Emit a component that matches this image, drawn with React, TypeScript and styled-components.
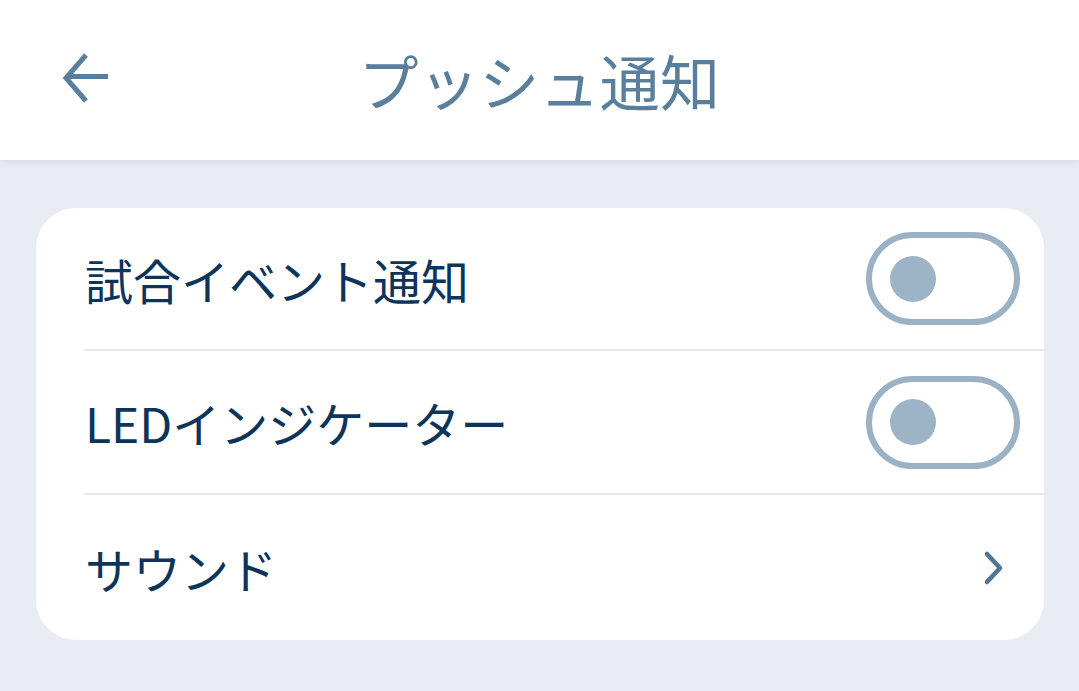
import React from "react";
import styled, { createGlobalStyle } from "styled-components";

const Global = createGlobalStyle`
  html, body { margin: 0; padding: 0; background: #e9ecf2; }
  body { font-family: "Noto Sans CJK JP", "Noto Sans", sans-serif; }
`;

const Page = styled.div`
  width: 1079px;
  height: 691px;
  background: #e9ecf2;
  overflow: hidden;
`;

const Header = styled.header`
  position: relative;
  height: 160px;
  background: #ffffff;
  display: flex;
  align-items: center;
  justify-content: center;
  box-shadow: 0 2px 8px rgba(0, 0, 0, 0.08);
`;

const BackButton = styled.button`
  position: absolute;
  left: 56px;
  top: 50px;
  width: 56px;
  height: 56px;
  border: none;
  background: transparent;
  padding: 0;
  display: flex;
  align-items: center;
  justify-content: center;
`;

const Title = styled.h1`
  margin: 0;
  margin-top: -2px;
  font-size: 60px;
  font-weight: 400;
  color: #5a7f9c;
  letter-spacing: 0.3px;
`;

const Content = styled.main`
  padding: 48px 35px 0 36px;
`;

const Card = styled.section`
  background: #ffffff;
  border-radius: 40px;
  overflow: hidden;
`;

const Row = styled.div<{ $divider?: boolean; $h: number }>`
  height: ${(p) => p.$h}px;
  margin-left: 48px;
  padding-right: 24px;
  display: flex;
  align-items: center;
  justify-content: space-between;
  border-bottom: ${(p) => (p.$divider ? "2px solid #e5e8ec" : "none")};
`;

const Label = styled.span`
  font-size: 48px;
  color: #0d3459;
  line-height: 1;
  margin-left: 1px;
`;

const Toggle = styled.div`
  box-sizing: border-box;
  width: 154px;
  height: 93px;
  border: 6px solid #9bb1c4;
  border-radius: 50px;
  display: flex;
  align-items: center;
  padding-left: 18px;
`;

const Knob = styled.div`
  width: 46px;
  height: 46px;
  border-radius: 50%;
  background: #9db3c6;
`;

const ChevronWrap = styled.div`
  width: 40px;
  display: flex;
  justify-content: center;
  margin-right: 6px;
`;

export default function App() {
  return (
    <Page>
      <Global />
      <Header>
        <BackButton aria-label="back">
          <svg width="52" height="52" viewBox="0 0 52 52" fill="none">
            <path
              d="M50 24.5H10 M28 3 L8 26 L28 49"
              stroke="#5a7f9c"
              strokeWidth="5"
              strokeLinecap="butt"
              strokeLinejoin="miter"
            />
          </svg>
        </BackButton>
        <Title>プッシュ通知</Title>
      </Header>
      <Content>
        <Card>
          <Row $divider $h={141}>
            <Label>試合イベント通知</Label>
            <Toggle>
              <Knob />
            </Toggle>
          </Row>
          <Row $divider $h={142}>
            <Label>LEDインジケーター</Label>
            <Toggle>
              <Knob />
            </Toggle>
          </Row>
          <Row $h={145}>
            <Label>サウンド</Label>
            <ChevronWrap>
              <svg width="22" height="36" viewBox="0 0 22 36" fill="none">
                <path
                  d="M4 4 L17 18 L4 32"
                  stroke="#4f7594"
                  strokeWidth="4.5"
                  strokeLinecap="round"
                  strokeLinejoin="round"
                />
              </svg>
            </ChevronWrap>
          </Row>
        </Card>
      </Content>
    </Page>
  );
}
